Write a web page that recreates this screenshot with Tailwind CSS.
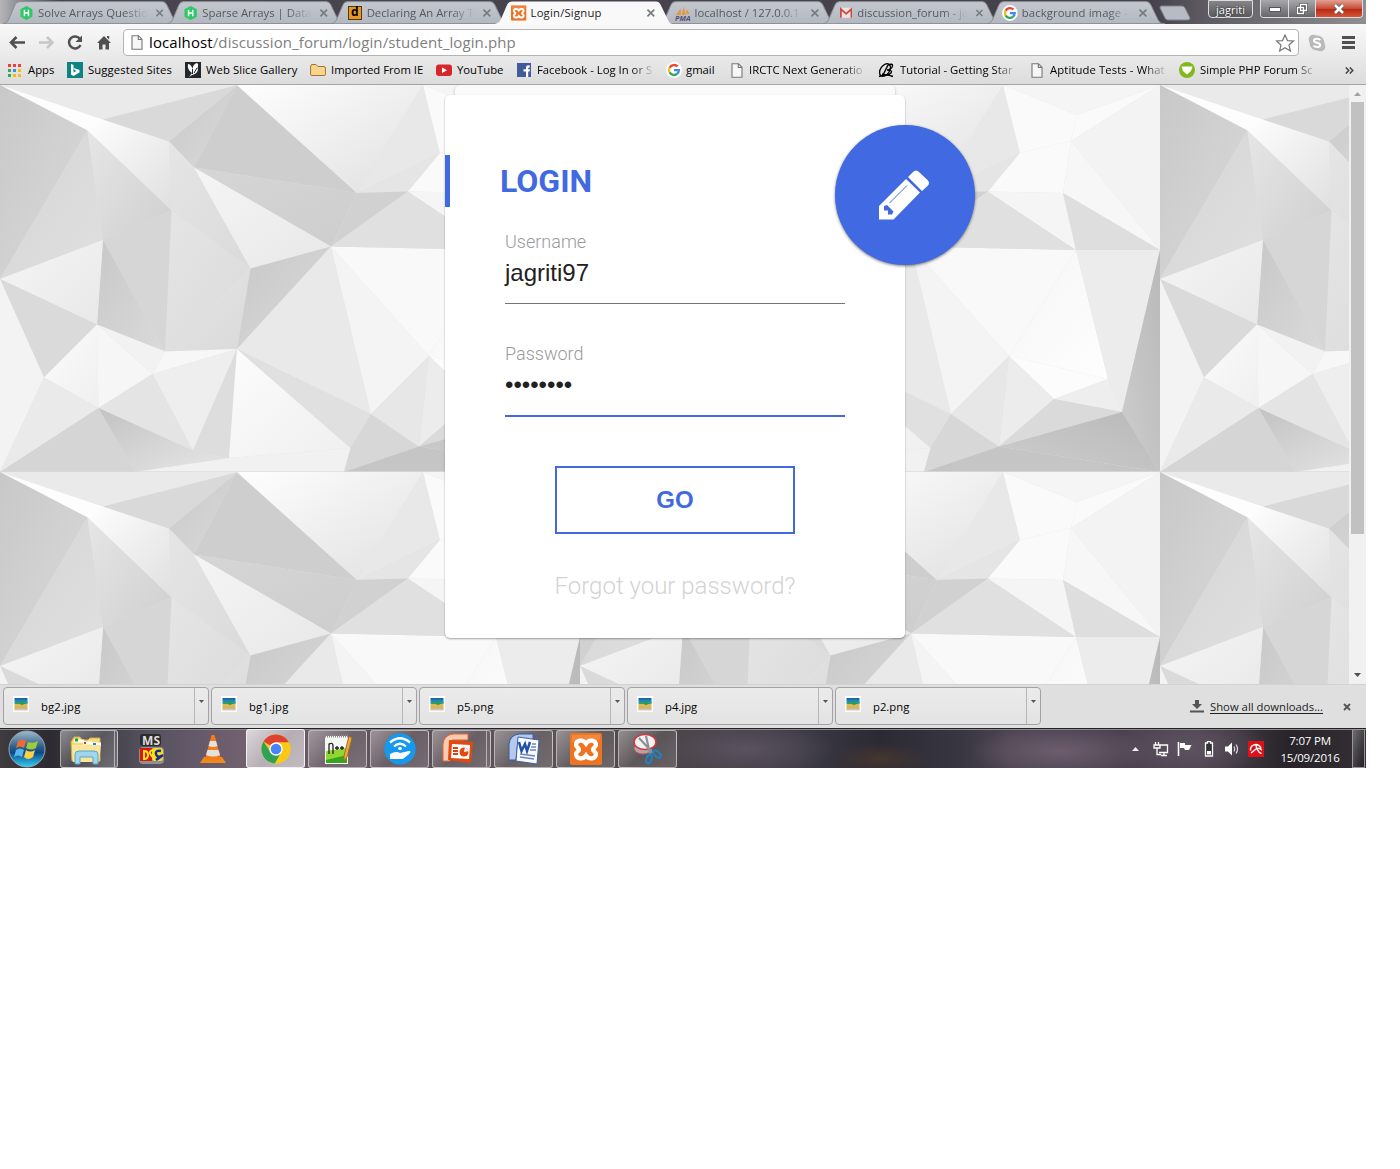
<!DOCTYPE html>
<html lang="en">
<head>
<meta charset="utf-8">
<title>Login/Signup</title>
<script src="https://cdn.jsdelivr.net/npm/@tailwindcss/browser@4"></script>
</head>
<body class="bg-white">
<svg class="absolute w-0 h-0" aria-hidden="true">
  <defs>
    <linearGradient id="tabg" x1="0" y1="0" x2="0" y2="1"><stop offset="0" stop-color="#c3c8cf"/><stop offset="1" stop-color="#b3b8c0"/></linearGradient>
    <linearGradient id="orb" x1="0" y1="0" x2="0" y2="1"><stop offset="0" stop-color="#9fb9cc"/><stop offset=".45" stop-color="#2d5d87"/><stop offset=".6" stop-color="#0b4a86"/><stop offset="1" stop-color="#35d0f5"/></linearGradient>
    <linearGradient id="beach" x1="0" y1="0" x2="0" y2="1"><stop offset="0" stop-color="#0f63a8"/><stop offset=".45" stop-color="#35a5cf"/><stop offset=".55" stop-color="#e8bd55"/><stop offset="1" stop-color="#d3a658"/></linearGradient>
    <symbol id="tab" viewBox="0 0 180 24"><path d="M0 24C4 23 5 21 6 19L12 5Q13.500 1.500 17 1.500H161Q164 1.500 165.500 4.500L173 20Q174.500 24 180 24Z" fill="url(#tabg)" stroke="#8b8c92"/></symbol>
    <symbol id="x" viewBox="0 0 10 10"><path d="M1.500 1.500L8.500 8.500M8.500 1.500L1.500 8.500" stroke="#777b80" stroke-width="1.700"/></symbol>
    <symbol id="hr" viewBox="0 0 14 16"><path d="M7 .5L13.500 4V12L7 15.500L.5 12V4Z" fill="#2ec866"/><path d="M4.800 4.500V11.500M9.200 4.500V11.500M4.800 8H9.200" stroke="#fff" stroke-width="1.600"/></symbol>
    <symbol id="goog" viewBox="0 0 16 16"><circle cx="8" cy="8" r="8" fill="#fff"/><g fill="none" stroke-width="2.300"><path d="M11.600 4.500A5 5 0 0 0 3.600 5.700" stroke="#ea4335"/><path d="M3.600 5.700A5 5 0 0 0 3.600 10.400" stroke="#fbbc05"/><path d="M3.600 10.400A5 5 0 0 0 11.300 11.700" stroke="#34a853"/><path d="M11.300 11.700A5 5 0 0 0 12.900 8.200H8" stroke="#4285f4"/></g></symbol>
    <symbol id="xam" viewBox="0 0 32 32"><rect width="32" height="32" rx="2" fill="#ee7422"/><path d="M2 2H30V7Q16 10 2 9Z" fill="#f79a55" opacity=".5"/><path d="M16 10.500C13 6 6 7 6 12C6 14.500 9 14.500 9 16.500C9 18.500 6 18.500 6 21C6 26 13 27 16 22.500C19 27 26 26 26 21C26 18.500 23 18.500 23 16.500C23 14.500 26 14.500 26 12C26 7 19 6 16 10.500Z" fill="none" stroke="#fff" stroke-width="4.200"/><path d="M12 16.500H20" stroke="#ee7422" stroke-width="3"/></symbol>
    <symbol id="page" viewBox="0 0 12 15"><path d="M1 .7H7.500L11 4.300V14.300H1ZM7.300 .7V4.500H11" fill="#f7f7f7" stroke="#777" stroke-width="1.100"/></symbol>
    <symbol id="pic" viewBox="0 0 16 16"><rect width="16" height="16" fill="#fff"/><rect x="1.500" y="2" width="13" height="12" fill="url(#beach)"/><path d="M2 8Q4 3.500 5 6Q7 7.500 8 5.500T11 6T14.500 5V7L9 9L5 7.500Z" fill="#299a58"/><rect x="1.500" y="12.500" width="13" height="2" fill="#cfc6b8"/></symbol>
    <symbol id="pencil" viewBox="0 0 52 52"><path d="M1 37L28 10L42 23.500L15.500 50.500H1Z" fill="#fff"/><path d="M30 8L35 3Q38 0 41 3L49.500 11Q52.500 14 49.500 17L44 22Z" fill="#fff"/><path d="M11.500 34L29 16.500" stroke="#4169e1" stroke-width="1"/><path d="M6 37L9 36L15.500 42.500L14 45.500H10V41.500H6Z" fill="#4169e1"/></symbol>

    <linearGradient id="a" x1="0" y1="0" x2="1" y2="1"><stop stop-color="#c8c8c8"/><stop offset="1" stop-color="#dadada"/></linearGradient>
    <linearGradient id="b" x1="0" y1="0" x2="1" y2="1"><stop stop-color="#fefefe"/><stop offset="1" stop-color="#e0e0e0"/></linearGradient>
    <linearGradient id="c" x1="0" y1="0" x2="1" y2="1"><stop stop-color="#d4d4d4"/><stop offset="1" stop-color="#e0e0e0"/></linearGradient>
    <linearGradient id="d" x1="0" y1="0" x2="1" y2="1"><stop stop-color="#e6e6e6"/><stop offset="1" stop-color="#cfcfcf"/></linearGradient>
    <linearGradient id="e" x1="0" y1="0" x2="1" y2="1"><stop stop-color="#f5f5f5"/><stop offset="1" stop-color="#e8e8e8"/></linearGradient>
    <linearGradient id="f" x1="0" y1="0" x2="1" y2="1"><stop stop-color="#e5e5e5"/><stop offset="1" stop-color="#dadada"/></linearGradient>
    <linearGradient id="g" x1="0" y1="0" x2="1" y2="1"><stop stop-color="#fcfcfc"/><stop offset="1" stop-color="#efefef"/></linearGradient>
    <linearGradient id="h" x1="0" y1="0" x2="1" y2="1"><stop stop-color="#f5f5f5"/><stop offset="1" stop-color="#fefefe"/></linearGradient>
    <linearGradient id="i" x1="0" y1="0" x2="1" y2="1"><stop stop-color="#c2c2c2"/><stop offset=".8" stop-color="#e0e0e0"/></linearGradient>
    <linearGradient id="j" x1="1" y1="0" x2="0" y2="1"><stop stop-color="#b9b9b9"/><stop offset="1" stop-color="#cdcdcd"/></linearGradient>
    <linearGradient id="k" x1="0" y1="0" x2="1" y2="1"><stop stop-color="#d6d6d6"/><stop offset="1" stop-color="#cdcdcd"/></linearGradient>
    <pattern id="poly" width="580" height="387" patternUnits="userSpaceOnUse">
      <rect width="580" height="387" fill="#e3e3e3"/>
      <g stroke="none">
      <path d="M0 0H237L103 34.500Z" fill="#eaeaea"/>
      <path d="M0 0L103 34.500L169 56.500L87.500 45.500Z" fill="#fdfdfd"/>
      <path d="M87.500 45.500L102 34.500L169 56.500L171.500 125.500Z" fill="url(#b)"/>
      <path d="M0 0L87.500 45.500L0 194Z" fill="url(#a)"/>
      <path d="M87.500 45.500L103 155L0 194Z" fill="url(#c)"/>
      <path d="M87.500 45.500L171.500 125.500L103 155Z" fill="url(#d)"/>
      <path d="M103 34.500L237 .5L169 56.500Z" fill="#d9d9d9"/>
      <path d="M169 56.500L237 .5L194 82.500Z" fill="url(#a)"/>
      <path d="M237 .5L357 108L194 82.500Z" fill="#cecece"/>
      <path d="M194 82.500L357 108L331 161.500Z" fill="url(#k)"/>
      <path d="M169 56.500L194 82.500L250.500 183.500L171.500 125.500Z" fill="url(#f)"/>
      <path d="M194 82.500L331 161.500L250.500 183.500Z" fill="url(#e)"/>
      <path d="M171.500 125.500L250.500 183.500L165 266.500Z" fill="url(#f)"/>
      <path d="M103 155L171.500 125.500L165 266.500Z" fill="#d6d6d6"/>
      <path d="M103 155L165 266.500L97 239.500Z" fill="url(#a)"/>
      <path d="M0 194L103 155L97 239.500Z" fill="url(#e)"/>
      <path d="M0 194L97 239.500L44 292.500Z" fill="#dadada"/>
      <path d="M0 194L44 292.500L0 387Z" fill="#f3f3f3"/>
      <path d="M250.500 183.500L165 266.500L237 264Z" fill="url(#f)"/>
      <path d="M250.500 183.500L331 161.500L237 264Z" fill="url(#a)"/>
      <path d="M97 239.500L98.500 323L44 292.500Z" fill="url(#g)"/>
      <path d="M97 239.500L152.500 289L98.500 323Z" fill="#f6f6f6"/>
      <path d="M97 239.500L165 266.500L152.500 289Z" fill="#f2f2f2"/>
      <path d="M165 266.500L237 264L152.500 289Z" fill="#f7f7f7"/>
      <path d="M152.500 289L237 264L193 365.500Z" fill="#eeeeee"/>
      <path d="M98.500 323L152.500 289L193 365.500Z" fill="#e4e4e4"/>
      <path d="M44 292.500L98.500 323L0 387Z" fill="#eaeaea"/>
      <path d="M0 387L98.500 323L135 387Z" fill="#d5d5d5"/>
      <path d="M98.500 323L193 365.500L229 373L135 387Z" fill="url(#i)"/>
      <path d="M237 264L193 365.500L229 373Z" fill="#dddddd"/>
      <path d="M237 264L229 373L350.500 363Z" fill="url(#g)"/>
      <path d="M237 264L350.500 363L371 329Z" fill="#e0e0e0"/>
      <path d="M331 161.500L237 264L371 329Z" fill="#e9e9e9"/>
      <path d="M135 387L229 373L350.500 363L344 387Z" fill="#f1f1f1"/>
      <path d="M350.500 363L371 329L419 361.500L344 387Z" fill="#d7d7d7"/>
      <path d="M331 161.500L371 329L429 271Z" fill="#f4f4f4"/>
      <path d="M331 161.500L429 271L496 165Z" fill="#f9f9f9"/>
      <path d="M429 271L496 165L528 294Z" fill="url(#h)"/>
      <path d="M237 0H423L357 108Z" fill="url(#b)"/>
      <path d="M423 0L440 68L357 108Z" fill="#e8e8e8"/>
      <path d="M440 68L408 106.500L357 108Z" fill="#e5e5e5"/>
      <path d="M357 108L408 106.500L331 161.500Z" fill="#d1d1d1"/>
      <path d="M408 106.500L496 165L331 161.500Z" fill="#e0e0e0"/>
      <path d="M423 0H580L497 30Z" fill="#f5f5f5"/>
      <path d="M423 0L497 30L491 56L440 68Z" fill="#fafafa"/>
      <path d="M497 30L580 0L491 56Z" fill="#fafafa"/>
      <path d="M491 56L580 0V165Z" fill="#f3f3f3"/>
      <path d="M440 68L491 56L483 108L408 106.500Z" fill="#fafafa"/>
      <path d="M491 56L580 165L483 108Z" fill="#f7f7f7"/>
      <path d="M408 106.500L483 108L496 165Z" fill="#f5f5f5"/>
      <path d="M483 108L580 165H496Z" fill="#dedede"/>
      <path d="M496 165H580L542 327L528 294Z" fill="#ececec"/>
      <path d="M580 165V387L542 327Z" fill="url(#j)"/>
      <path d="M429 271L528 294L474 314Z" fill="#fcfcfc"/>
      <path d="M528 294L542 327L474 314Z" fill="#eeeeee"/>
      <path d="M429 271L474 314L419 361.500Z" fill="#ececec"/>
      <path d="M371 329L429 271L419 361.500Z" fill="#e7e7e7"/>
      <path d="M474 314L542 327L419 361.500Z" fill="#dadada"/>
      <path d="M419 361.500L542 327L580 387Z" fill="url(#j)"/>
      <path d="M419 361.500L580 387H344Z" fill="#c5c5c5"/>
      </g>
      <rect y="386" width="580" height="1" fill="#dadada" opacity=".7"/>
    </pattern>
  </defs>
</svg>

<div class="w-[1366px] h-[768px] flex flex-col overflow-hidden font-['Open_Sans',sans-serif]">
  <!-- tab strip -->
  <header class="h-6 flex shrink-0 relative bg-[linear-gradient(90deg,#b5b4b7_0,#8b8a90_20px,#48454e_60px,#45414b_1150px,#5b595f_1200px,#8f8f93_1366px)] text-[11.3px] text-[#55585e] leading-6">
    <div class="w-[164px] h-6 relative flex items-center pl-5 shrink-0"><svg class="absolute left-[3px] top-0 w-[178px] h-6"><use href="#tab"/></svg>
      <svg class="relative w-3.5 h-4 mt-0.5"><use href="#hr"/></svg><span class="relative ml-[5px] w-[112px] whitespace-nowrap mt-0.5 tracking-[0.07px] [mask-image:linear-gradient(90deg,#000_78%,transparent)]">Solve Arrays Questio</span><svg class="relative w-2.5 h-2.5 ml-[7px] mt-0.5"><use href="#x"/></svg></div>
    <div class="w-[164px] h-6 relative flex items-center pl-5 shrink-0"><svg class="absolute left-[3px] top-0 w-[178px] h-6"><use href="#tab"/></svg>
      <svg class="relative w-3.5 h-4 mt-0.5"><use href="#hr"/></svg><span class="relative ml-[5px] w-[112px] whitespace-nowrap mt-0.5 [mask-image:linear-gradient(90deg,#000_78%,transparent)]">Sparse Arrays | Data</span><svg class="relative w-2.5 h-2.5 ml-[7px] mt-0.5"><use href="#x"/></svg></div>
    <div class="w-[164px] h-6 relative flex items-center pl-5 shrink-0"><svg class="absolute left-[3px] top-0 w-[178px] h-6"><use href="#tab"/></svg>
      <span class="relative w-3.5 h-3.5 mt-0.5 bg-[#e8981f] border border-[#4d3a1c] text-black font-bold text-[12px] leading-[10px] text-center">d</span><span class="relative ml-[5px] w-[112px] whitespace-nowrap mt-0.5 [mask-image:linear-gradient(90deg,#000_78%,transparent)]">Declaring An Array T</span><svg class="relative w-2.5 h-2.5 ml-[7px] mt-0.5"><use href="#x"/></svg></div>
    <div class="w-[164px] h-6 relative z-10 flex items-center pl-5 shrink-0 text-[#222]"><svg class="absolute left-[3px] top-0 w-[178px] h-6" viewBox="0 0 178 24"><path d="M0 24C4 23 5 21 6 19L12 5Q13.500 1.500 17 1.500H161Q164 1.500 165.500 4.500L173 20Q174.500 24 178 24Z" fill="#f9f9f9"/></svg>
      <svg class="relative w-4 h-4 -ml-px mt-0.5" viewBox="0 0 32 32"><use href="#xam"/></svg><span class="relative ml-1 w-[112px] whitespace-nowrap mt-0.5 tracking-[0.2px]">Login/Signup</span><svg class="relative w-2.5 h-2.5 ml-[7px] mt-0.5"><use href="#x"/></svg></div>
    <div class="w-[164px] h-6 relative flex items-center pl-[19px] shrink-0"><svg class="absolute left-[3px] top-0 w-[178px] h-6"><use href="#tab"/></svg>
      <svg class="relative w-4 h-4 mt-0.5" viewBox="0 0 16 16"><path d="M1 10L6 3V10ZM7 10L9 1L11 10ZM11.500 9L12 4L15 9Z" fill="#e8963a"/><text x="0" y="15.800" font-size="6.500" font-weight="bold" font-style="italic" textLength="16" lengthAdjust="spacingAndGlyphs" fill="#555079">PMA</text></svg><span class="relative ml-1 w-[112px] whitespace-nowrap mt-0.5 [mask-image:linear-gradient(90deg,#000_78%,transparent)]">localhost / 127.0.0.1</span><svg class="relative w-2.5 h-2.5 ml-[7px] mt-0.5"><use href="#x"/></svg></div>
    <div class="w-[164px] h-6 relative flex items-center pl-5 shrink-0"><svg class="absolute left-[3px] top-0 w-[178px] h-6"><use href="#tab"/></svg>
      <svg class="relative w-3.5 h-3 mt-0.5" viewBox="0 0 14 12"><rect width="14" height="11.500" fill="#e9e5e5"/><path d="M1 11.500V1.500L7 7L13 1.500V11.500" fill="none" stroke="#d2493d" stroke-width="2"/></svg><span class="relative ml-[5px] w-[112px] whitespace-nowrap mt-0.5 [mask-image:linear-gradient(90deg,#000_78%,transparent)]">discussion_forum - ja</span><svg class="relative w-2.5 h-2.5 ml-[7px] mt-0.5"><use href="#x"/></svg></div>
    <div class="w-[164px] h-6 relative flex items-center pl-[18px] shrink-0"><svg class="absolute left-[3px] top-0 w-[178px] h-6"><use href="#tab"/></svg>
      <svg class="relative w-4 h-4 mt-0.5"><use href="#goog"/></svg><span class="relative ml-1 w-[110px] whitespace-nowrap mt-0.5 tracking-[0.1px] [mask-image:linear-gradient(90deg,#000_80%,transparent)]">background image -</span><svg class="relative w-2.5 h-2.5 ml-[8px] mt-0.5"><use href="#x"/></svg></div>
    <svg class="w-8 h-4 mt-[5px] ml-[11px] shrink-0" viewBox="0 0 32 16"><path d="M2 1H23Q25 1 26 3L31 13Q31 15 29 15H9Q7 15 6 13L1 3Q1 1 2 1Z" fill="#b6bbc5" stroke="#808289"/></svg>
    <div class="w-[45px] h-[18px] ml-[17px] rounded-b border border-[#ddd] bg-gradient-to-b from-[#858587] to-[#5a5a5c] text-white text-[11px] leading-[17px] text-center [text-shadow:0_0_2px_#000]">jagriti</div>
    <div class="flex h-[18px] ml-[7px] w-[103px] rounded-b border border-[#ddd] border-t-0 overflow-hidden">
      <div class="w-7 border-r border-[#ddd] bg-gradient-to-b from-[#a8a8ab] to-[#67676b] flex justify-center items-center"><span class="w-3 h-[5px] mt-0.5 bg-white border border-[#555]"></span></div>
      <div class="w-[27px] border-r border-[#ddd] bg-gradient-to-b from-[#a8a8ab] to-[#67676b] flex justify-center items-center"><svg class="w-3 h-3" viewBox="0 0 12 12"><path d="M4.500 1.500H10.500V7.500H4.500ZM1.500 4.500H7.500V10.500H1.500Z" fill="#707078" stroke="#444" stroke-width="2.600"/><path d="M4.500 1.500H10.500V7.500H4.500ZM1.500 4.500H7.500V10.500H1.500Z" fill="none" stroke="#fff" stroke-width="1.400"/></svg></div>
      <div class="flex-1 bg-[linear-gradient(#e2a091,#c64e38_50%,#bb2a12_55%,#d4553b)] flex justify-center items-center"><svg class="w-3 h-3" viewBox="0 0 12 12"><path d="M2 2L10 10M10 2L2 10" stroke="#555" stroke-width="4.200"/><path d="M2 2L10 10M10 2L2 10" stroke="#fff" stroke-width="2.600"/></svg></div>
    </div>
  </header>

  <!-- toolbar -->
  <div class="h-[61px] shrink-0 bg-gradient-to-b from-[#f9f9f9] to-[#dcdcdc] border-b border-[#a7a5a6]">
    <div class="h-[37px] flex items-center pl-[9px]">
      <svg class="w-4 h-4 shrink-0" viewBox="0 0 16 16"><path d="M16 7.500H2M7.500 2L2 7.500L7.500 13" fill="none" stroke="#505050" stroke-width="2.600"/></svg>
      <svg class="w-4 h-4 ml-[14px] shrink-0" viewBox="0 0 16 16"><path d="M0 7.500H13.500M8 2L13.500 7.500L8 13" fill="none" stroke="#c6c6c6" stroke-width="2.600"/></svg>
      <svg class="w-4 h-4 ml-[12px] shrink-0" viewBox="0 0 16 16"><path d="M13 4A6 6 0 1 0 13.500 10" fill="none" stroke="#505050" stroke-width="2.500"/><path d="M15 .5V7H8.500Z" fill="#505050"/></svg>
      <svg class="w-4 h-4 ml-[13px] shrink-0" viewBox="0 0 16 16"><path d="M8 1L15 8H13V14.500H9.500V9.500H6.500V14.500H3V8H1ZM11 1H13.200V4.500L11 2.500Z" fill="#505050"/></svg>
      <div class="w-[1176px] h-[27px] ml-[11px] flex items-center bg-white border border-[#b4b4b4] rounded-sm pl-[7px] text-[15px] text-[#808080] shrink-0">
        <svg class="w-3 h-[15px]"><use href="#page"/></svg><span class="ml-[6px] -mt-0.5 tracking-[0.1px] leading-6"><span class="text-black">localhost</span>/discussion_forum/login/student_login.php</span>
        <svg class="w-5 h-[18px] ml-auto mr-[3px]" viewBox="0 0 20 18"><path d="M10 1L12.500 6.600L18.500 7L14 11L15.400 17L10 13.800L4.600 17L6 11L1.500 7L7.500 6.600Z" fill="#fff" stroke="#777" stroke-width="1.200"/></svg>
      </div>
      <svg class="w-[18px] h-[18px] ml-[9px] shrink-0" viewBox="0 0 18 18"><circle cx="9" cy="9" r="7.500" fill="#b9b9b9"/><circle cx="5.500" cy="5.500" r="4.800" fill="#b9b9b9"/><circle cx="12.500" cy="12.500" r="4.800" fill="#b9b9b9"/><path d="M12.300 6.200C11 4.300 6 4.200 6 6.700C6 9.400 12.200 8 12.200 11C12.200 13.800 7 13.600 5.600 11.500" fill="none" stroke="#fff" stroke-width="2"/></svg>
      <svg class="w-[13px] h-[13px] ml-4 shrink-0" viewBox="0 0 13 13"><path d="M0 1.500H13M0 6.500H13M0 11.500H13" stroke="#505050" stroke-width="2.800"/></svg>
    </div>
    <nav class="h-[18px] flex items-center pl-2 text-[11.3px] text-black whitespace-nowrap leading-[18px]">
      <div class="w-[59px] flex items-center shrink-0"><svg class="w-[13px] h-[13px] mr-[7px]" viewBox="0 0 13 13"><path d="M0 0H3V3H0ZM5 0H8V3H5ZM10 0H13V3H10Z" fill="#ea4335"/><path d="M0 5H3V8H0Z" fill="#34a853"/><path d="M5 5H8V8H5Z" fill="#4285f4"/><path d="M10 5H13V8H10Z" fill="#fbbc05"/><path d="M0 10H3V13H0Z" fill="#34a853"/><path d="M5 10H8V13H5ZM10 10H13V13H10Z" fill="#fbbc05"/></svg>Apps</div>
      <div class="w-[118px] flex items-center shrink-0 tracking-[0.12px]"><svg class="w-4 h-4 mr-[5px]" viewBox="0 0 16 16"><rect width="16" height="16" fill="#0c8484"/><path d="M4 2L6.500 3V10.500L9.500 9L7.500 8L6.800 6L12.500 8V10.500L6.500 14L4 12.500Z" fill="#fff"/></svg>Suggested Sites</div>
      <div class="w-[125px] flex items-center shrink-0 tracking-[0.08px]"><svg class="w-4 h-4 mr-[5px]" viewBox="0 0 16 16"><rect width="16" height="16" fill="#24282c"/><path d="M3 2Q6 2 7.500 7Q8 2 12 1Q14 2 12.500 6Q14 9 10 12L7 13L4 15L7 11Q2 8 3 2Z" fill="#fff"/><path d="M7.500 7V12M9 11L12 6" stroke="#24282c"/></svg>Web Slice Gallery</div>
      <div class="w-[126px] flex items-center shrink-0"><svg class="w-4 h-4 mr-[5px]" viewBox="0 0 16 16"><path d="M.6 5Q.6 2.500 2 2.500H6L8 4.500H14Q15.400 4.500 15.400 6V12.500Q15.400 13.500 14 13.500H2Q.6 13.500 .6 12.500Z" fill="#f8d58c" stroke="#a5732d"/></svg>Imported From IE</div>
      <div class="w-[81px] flex items-center shrink-0"><svg class="w-4 h-4 mr-[5px]" viewBox="0 0 16 16"><rect y="2.500" width="16" height="11.500" rx="3" fill="#d7262c"/><path d="M6 5.500L11 8.200L6 11Z" fill="#fff"/></svg>YouTube</div>
      <div class="w-[150px] flex items-center shrink-0"><svg class="w-3.5 h-3.5 mr-[6px]" viewBox="0 0 14 14"><rect width="14" height="14" fill="#3f5b9b"/><path d="M9 14V8.500H6.500V6.200H9V4.500Q9 2 12.800 2.400V4.500Q11.200 4.300 11.200 5.200V6.200H13L12.600 8.500H11.200V14Z" fill="#fff"/></svg><span class="w-[118px] [mask-image:linear-gradient(90deg,#000_80%,transparent)]">Facebook - Log In or S</span></div>
      <div class="w-[64px] flex items-center shrink-0"><svg class="w-4 h-4 mr-[4px] -ml-px"><use href="#goog"/></svg>gmail</div>
      <div class="w-[147px] flex items-center shrink-0"><svg class="w-3 h-[15px] mr-[6px]"><use href="#page"/></svg><span class="w-[118px] [mask-image:linear-gradient(90deg,#000_80%,transparent)]">IRCTC Next Generatio</span></div>
      <div class="w-[152px] flex items-center shrink-0"><svg class="w-[17px] h-4 mr-[5px]" viewBox="0 0 17 16"><ellipse cx="7" cy="8" rx="4.500" ry="7" transform="rotate(35 7 8)" fill="none" stroke="#000" stroke-width="1.300"/><path d="M5 13L10 3Q15 1 14.500 4Q14 7 9 8Q15 8 13 11Q10 14 4 12M1 14.500Q8 11.500 15 14.500" fill="none" stroke="#000" stroke-width="1.400"/></svg><span class="w-[118px] [mask-image:linear-gradient(90deg,#000_80%,transparent)]">Tutorial - Getting Star</span></div>
      <div class="w-[149px] flex items-center shrink-0"><svg class="w-3 h-[15px] ml-px mr-[7px]"><use href="#page"/></svg><span class="w-[118px] tracking-[0.1px] [mask-image:linear-gradient(90deg,#000_80%,transparent)]">Aptitude Tests - What</span></div>
      <div class="w-[165px] flex items-center shrink-0"><svg class="w-4 h-4 mr-[5px]" viewBox="0 0 16 16"><circle cx="8" cy="8" r="8" fill="#83b81a"/><path d="M2.500 4.500H13.500L12 9L8 12.500L4 9Z" fill="#fff"/></svg><span class="w-[118px] [mask-image:linear-gradient(90deg,#000_80%,transparent)]">Simple PHP Forum Sc</span></div>
      <svg class="w-[9px] h-[7px] ml-px" viewBox="0 0 9 7"><path d="M.8 .5L3.800 3.500L.8 6.500M4.800 .5L7.800 3.500L4.800 6.500" fill="none" stroke="#444" stroke-width="1.500"/></svg>
    </nav>
  </div>

  <!-- page -->
  <main class="h-[599px] shrink-0 flex relative overflow-hidden">
    <svg class="w-[1349px] h-[599px] shrink-0"><rect width="1349" height="599" fill="url(#poly)"/></svg>
    <div class="w-[17px] bg-[#f1f1f1] flex flex-col items-center">
      <svg class="w-[7px] h-1 mt-[7px]" viewBox="0 0 7 4"><path d="M0 4L3.500 0L7 4Z" fill="#a3a3a3"/></svg>
      <div class="w-[13px] h-[432px] mt-[6px] bg-[#c1c1c1]"></div>
      <svg class="w-[7px] h-1 mt-auto mb-[7px]" viewBox="0 0 7 4"><path d="M0 0L3.500 4L7 0Z" fill="#505050"/></svg>
    </div>
    <div class="absolute left-[455px] top-0 w-[440px] h-5 rounded-t-[5px] bg-[#fafafa] shadow-[0_1px_3px_rgba(0,0,0,.25)]"></div>
    <section class="absolute left-[445px] top-[10px] w-[460px] h-[543px] rounded-[5px] bg-white shadow-[0_1px_2px_rgba(0,0,0,.35)] pt-[60px] font-['Roboto',sans-serif]">
      <h1 class="h-[52px] border-l-[5px] border-[#4169e1] pl-[50px] text-[32px] leading-[52px] font-bold text-[#4169e1]">LOGIN</h1>
      <div class="ml-[60px] w-[340px] mt-[21px] h-[76px] border-b border-[#757575]">
        <div class="text-[18px] leading-[28px] font-light text-[#9a9a9a]">Username</div>
        <div class="text-[24px] leading-[28px] mt-[3px] text-[#212121] font-['Liberation_Sans',sans-serif]">jagriti97</div>
      </div>
      <div class="ml-[60px] w-[340px] mt-9 h-[77px] border-b-2 border-[#4169e1]">
        <div class="text-[18px] leading-[28px] font-light text-[#9a9a9a]">Password</div>
        <div class="text-[24px] leading-[28px] mt-[3px] text-[#212121] font-['Liberation_Sans',sans-serif]">••••••••</div>
      </div>
      <button class="block ml-[110px] mt-[49px] w-[240px] h-[68px] border-2 border-[#4169e1] text-[24px] font-bold text-[#4169e1] font-['Liberation_Sans',sans-serif]">GO</button>
      <div class="mt-[37px] text-center text-[24px] leading-[30px] font-light text-[#d3d3d3]">Forgot your password?</div>
    </section>
    <div class="absolute left-[835px] top-[40px] w-[140px] h-[140px] rounded-full bg-[#4169e1] shadow-[0_1px_3px_rgba(0,0,0,.5)] pl-[43px] pt-[44px]"><svg class="w-[52px] h-[52px]"><use href="#pencil"/></svg></div>
  </main>

  <!-- downloads shelf -->
  <div class="h-11 shrink-0 flex items-center bg-[#dfdfdf] border-t border-[#d2d2d2] pl-[3px] gap-[2px] text-[11.3px] text-black">
    <div class="w-[206px] h-[38px] mb-px flex border border-[#a3a3a3] rounded-sm bg-gradient-to-b from-[#ebebeb] to-[#e3e3e3]"><div class="flex-1 flex items-center pl-[9px]"><svg class="w-4 h-4 mb-1 mr-3"><use href="#pic"/></svg><span class="mt-0.5 tracking-[0.15px]">bg2.jpg</span></div><div class="w-[14px] border-l border-[#b5b5b5] pt-3 pl-[4px]"><svg class="w-[5px] h-[3px]" viewBox="0 0 5 3"><path d="M0 0H5L2.500 3Z" fill="#555"/></svg></div></div>
    <div class="w-[206px] h-[38px] mb-px flex border border-[#a3a3a3] rounded-sm bg-gradient-to-b from-[#ebebeb] to-[#e3e3e3]"><div class="flex-1 flex items-center pl-[9px]"><svg class="w-4 h-4 mb-1 mr-3"><use href="#pic"/></svg><span class="mt-0.5 tracking-[0.15px]">bg1.jpg</span></div><div class="w-[14px] border-l border-[#b5b5b5] pt-3 pl-[4px]"><svg class="w-[5px] h-[3px]" viewBox="0 0 5 3"><path d="M0 0H5L2.500 3Z" fill="#555"/></svg></div></div>
    <div class="w-[206px] h-[38px] mb-px flex border border-[#a3a3a3] rounded-sm bg-gradient-to-b from-[#ebebeb] to-[#e3e3e3]"><div class="flex-1 flex items-center pl-[9px]"><svg class="w-4 h-4 mb-1 mr-3"><use href="#pic"/></svg><span class="mt-0.5">p5.png</span></div><div class="w-[14px] border-l border-[#b5b5b5] pt-3 pl-[4px]"><svg class="w-[5px] h-[3px]" viewBox="0 0 5 3"><path d="M0 0H5L2.500 3Z" fill="#555"/></svg></div></div>
    <div class="w-[206px] h-[38px] mb-px flex border border-[#a3a3a3] rounded-sm bg-gradient-to-b from-[#ebebeb] to-[#e3e3e3]"><div class="flex-1 flex items-center pl-[9px]"><svg class="w-4 h-4 mb-1 mr-3"><use href="#pic"/></svg><span class="mt-0.5">p4.jpg</span></div><div class="w-[14px] border-l border-[#b5b5b5] pt-3 pl-[4px]"><svg class="w-[5px] h-[3px]" viewBox="0 0 5 3"><path d="M0 0H5L2.500 3Z" fill="#555"/></svg></div></div>
    <div class="w-[206px] h-[38px] mb-px flex border border-[#a3a3a3] rounded-sm bg-gradient-to-b from-[#ebebeb] to-[#e3e3e3]"><div class="flex-1 flex items-center pl-[9px]"><svg class="w-4 h-4 mb-1 mr-3"><use href="#pic"/></svg><span class="mt-0.5">p2.png</span></div><div class="w-[14px] border-l border-[#b5b5b5] pt-3 pl-[4px]"><svg class="w-[5px] h-[3px]" viewBox="0 0 5 3"><path d="M0 0H5L2.500 3Z" fill="#555"/></svg></div></div>
    <svg class="w-3.5 h-[13px] ml-[147px]" viewBox="0 0 14 13"><path d="M5 0H9V4H12L7 9L2 4H5ZM0 10.500H14V12.500H0Z" fill="#555"/></svg>
    <span class="ml-1 w-[114px] mt-px whitespace-nowrap underline underline-offset-2 text-[#222]">Show all downloads...</span>
    <svg class="w-2 h-2 ml-[17px]" viewBox="0 0 8 8"><path d="M1 1L7 7M7 1L1 7" stroke="#555" stroke-width="1.900"/></svg>
  </div>

  <!-- taskbar -->
  <footer class="h-10 shrink-0 relative flex items-center border-t border-[#222] shadow-[inset_0_1px_0_#8d8a90] bg-[radial-gradient(ellipse_90px_30px_at_745px_20px,#5b5260,transparent),radial-gradient(ellipse_50px_16px_at_880px_30px,#46362f,transparent),radial-gradient(ellipse_90px_26px_at_1060px_22px,#6d5d6e,transparent),radial-gradient(ellipse_80px_30px_at_1190px_18px,#5d5260,transparent),linear-gradient(90deg,#3f3b40_0,#2d2b31_50px,#46434c_110px,#56525f_150px,#685b6c_210px,#71616f_240px,#5c5058_400px,#5b5356_540px,#4a4346_680px,#3c3a45_800px,#2b2a34_880px,#383641_960px,#4d4552_1010px,#4a414f_1120px,#4f4552_1200px,#272328_1290px,#332f35_1366px)]">
    <svg class="w-[38px] h-[38px] ml-2 shrink-0" viewBox="0 0 38 38"><circle cx="19" cy="19" r="18" fill="url(#orb)" stroke="#91a8b7"/><path d="M10 11Q14 8 18 11L16 18Q12 15 8 18Z" fill="#ee6b37"/><path d="M20 12Q25 14 30 11L28 18Q23 21 18 18Z" fill="#9ccb3d"/><path d="M8 20Q12 17 16 20L14 27Q10 24 6 27Z" fill="#58b4ea"/><path d="M18 20Q22 23 27 20L25 27Q20 31 16 27Z" fill="#fbd146"/></svg>
    <div class="w-[58px] h-[38px] ml-[14px] shrink-0 flex border border-white/50 rounded-[3px] bg-[linear-gradient(135deg,#ffffff70,#ffffff20_50%,#ffffff38)] items-center pl-[9px]"><svg class="w-8 h-8" viewBox="0 0 32 32"><path d="M1 9L4 4H10L12 7H18L20 5H30V28H2Z" fill="#f6db7c" stroke="#d6ac3e"/><path d="M4 8H14M13 10H22M22 11H31" stroke="#fff" stroke-width="3"/><path d="M5 7H8" stroke="#19a53a" stroke-width="3"/><path d="M14 10H16" stroke="#d43a2a" stroke-width="2"/><path d="M23 11H26" stroke="#2a86d4" stroke-width="2"/><path d="M2 12H31L29 29H3Z" fill="#fae69b"/><path d="M5 31V21Q5 18 9 18H24Q28 18 28 21V31H23V24H10V31Z" fill="#9fd5ed" stroke="#59a6ca"/></svg><span class="h-9 ml-3 border-l border-white/50"></span></div>
    <svg class="w-[30px] h-[32px] ml-[17px] shrink-0" viewBox="0 0 30 32"><rect x="5" y="1" width="21" height="12" rx="3" fill="#2b2b2b"/><text x="7" y="11.500" font-size="12" font-weight="bold" textLength="18" fill="#ddd">MS</text><rect x="4" y="14" width="25" height="17" rx="4" fill="#8f8f95"/><rect x="5" y="15" width="12" height="13" fill="#db1414"/><rect x="17" y="15" width="11" height="13" rx="3" fill="#f3df19"/><path d="M9 18V26Q13 26 13 22T9 18ZM18 17Q13 18 16 22T20 27" fill="none" stroke="#ffe91b" stroke-width="2"/><path d="M26 18Q20 17 21 21T26 23T21 27" fill="none" stroke="#1b2b93" stroke-width="2.500"/></svg>
    <svg class="w-[28px] h-[30px] ml-[34px] shrink-0" viewBox="0 0 28 30"><path d="M5 23H23L27 29H1Z" fill="#f08a1c"/><path d="M12.500 1H15.500L22 25Q14 29 6 25Z" fill="#f47d17"/><path d="M11 7H17L18.500 12Q14 14 9.500 12ZM8.500 16H19.500L21 21Q14 24 7 21Z" fill="#e4e2e0"/></svg>
    <div class="w-[59px] h-[39px] ml-[19px] shrink-0 flex items-center justify-center border border-white/80 rounded-[3px] bg-[linear-gradient(135deg,#ffffffc0,#ffffff80_50%,#ffffff98)]"><svg class="w-[30px] h-[30px]" viewBox="0 0 30 30"><circle cx="15" cy="15" r="14.500" fill="#fbc816"/><path d="M15 15L2.500 7.500A14.500 14.500 0 0 1 28 8.500H15Z" fill="#e04232"/><path d="M2.500 7.500A14.500 14.500 0 0 0 14 29.500L20.500 18L15 15L9.500 18Z" fill="#30a353"/><path d="M15 8.500H28A14.500 14.500 0 0 1 14 29.500L20.500 18Z" fill="#fbc816"/><circle cx="15" cy="15" r="6.700" fill="#fff"/><circle cx="15" cy="15" r="5.300" fill="#4685f3"/></svg></div>
    <div class="w-[59px] h-[38px] ml-[3px] shrink-0 flex items-center justify-center border border-white/50 rounded-[3px] bg-[linear-gradient(135deg,#ffffff60,#ffffff15_50%,#ffffff28)]"><svg class="w-8 h-8" viewBox="0 0 32 32"><path d="M3 3H26V31H3Z" fill="#f5f7f2"/><path d="M4 18L25 15V30H4Z" fill="#91d633"/><path d="M4 27L25 22V30H4Z" fill="#38a51e"/><path d="M3 3H26" stroke="#888" stroke-dasharray="1 1" stroke-width="3"/><path d="M7 21V11Q11 9 11 13V21M13 15H17M15 13V17M18 15H22M20 13V17" fill="none" stroke="#222" stroke-width="1.300"/><path d="M30 5L25 24L22 28L22 23L27 3Z" fill="#edac38" stroke="#a96825"/></svg></div>
    <div class="w-[59px] h-[38px] ml-[3px] shrink-0 flex items-center justify-center border border-white/50 rounded-[3px] bg-[linear-gradient(135deg,#ffffff60,#ffffff15_50%,#ffffff28)]"><svg class="w-8 h-8" viewBox="0 0 32 32"><circle cx="16" cy="16" r="15.700" fill="#1698ec"/><path d="M6 9.500Q16 1 26 9.500M10 13.500Q16 8 22 13.500" fill="none" stroke="#fff" stroke-width="2.300"/><circle cx="16" cy="15.500" r="1.800" fill="#fff"/><path d="M6 21Q12 17.500 16 20L25 18Q28 18 25 21L19 26H11L6 26Z" fill="#fff"/></svg></div>
    <div class="w-[59px] h-[38px] ml-[3px] shrink-0 flex items-center border border-white/50 rounded-[3px] bg-[linear-gradient(135deg,#ffffff60,#ffffff15_50%,#ffffff28)] pl-[9px]"><svg class="w-8 h-8" viewBox="0 0 32 32"><path d="M1 28V11Q2 2 11 1H26V7H10L8 28Z" fill="#f8cbb3" stroke="#e96431"/><path d="M7 7L31 9L29 30L6 27Z" fill="#e3490e"/><path d="M10 11L28 12L27 26L9 25Z" fill="#fff"/><path d="M11 15H16M11 18H16M11 21H16" stroke="#d84310" stroke-width="2"/><circle cx="22" cy="19" r="4.500" fill="#e3490e"/><path d="M22 19L23 14L27 18Z" fill="#fff"/></svg><span class="h-9 ml-3 border-l border-white/50"></span></div>
    <div class="w-[59px] h-[38px] ml-[3px] shrink-0 flex items-center justify-center border border-white/50 rounded-[3px] bg-[linear-gradient(135deg,#ffffff60,#ffffff15_50%,#ffffff28)]"><svg class="w-8 h-8" viewBox="0 0 32 32"><path d="M1 27V11Q2 2 11 1H25V7H10L8 27Z" fill="#b7c9ea" stroke="#2f5caa"/><path d="M10 4L31 7L29 31L8 28Z" fill="#f9faff" stroke="#3c62ad"/><path d="M11 9L13.500 18L17 11L19 18L22 9" fill="none" stroke="#2252a7" stroke-width="2.500"/><path d="M24 11H28M23 14H28M22 17H28M12 21L27 23M12 24L26 26" stroke="#6c85b7" stroke-width="1.500"/></svg></div>
    <div class="w-[59px] h-[38px] ml-[3px] shrink-0 flex items-center justify-center border border-white/50 rounded-[3px] bg-[linear-gradient(135deg,#ffffff60,#ffffff15_50%,#ffffff28)]"><svg class="w-8 h-8" viewBox="0 0 32 32"><use href="#xam"/></svg></div>
    <div class="w-[59px] h-[38px] ml-[3px] shrink-0 flex items-center justify-center border border-white/50 rounded-[3px] bg-[linear-gradient(135deg,#ffffff60,#ffffff15_50%,#ffffff28)]"><svg class="w-8 h-8" viewBox="0 0 32 32"><ellipse cx="11" cy="15" rx="9" ry="6" fill="#b7a3a6" stroke="#c35b63"/><ellipse cx="13" cy="9" rx="11" ry="7.500" fill="#f2f2f2" stroke="#d03840" stroke-width="1.500"/><path d="M7 5L21 20M14 3L18 21" stroke="#8b9297" stroke-width="2.200"/><g fill="none" stroke="#1c83c6" stroke-width="2"><ellipse cx="25" cy="21" rx="2.500" ry="4.500" transform="rotate(-45 25 21)"/><ellipse cx="17" cy="26" rx="2.500" ry="4.500" transform="rotate(20 17 26)"/></g></svg></div>
    <svg class="w-[7px] h-1 ml-[455px] shrink-0" viewBox="0 0 7 4"><path d="M0 4L3.500 0L7 4Z" fill="#eee"/></svg>
    <svg class="w-4 h-4 ml-[14px] shrink-0" viewBox="0 0 16 16"><path d="M6.500 4H14.500V11.500H6M8 14.500H14M11 11.500V14.500M2.500 1V4M5.500 1V4M1 4H7V7H1ZM4 7V13.500H8" fill="none" stroke="#fff" stroke-width="1.300"/></svg>
    <svg class="w-4 h-4 ml-2 shrink-0" viewBox="0 0 16 16"><path d="M1.500 1V15" stroke="#fff" stroke-width="1.600"/><path d="M3 2H8V4H14.500L12 9H8L7 7H3Z" fill="#fff"/></svg>
    <svg class="w-[10px] h-4 ml-[11px] shrink-0" viewBox="0 0 10 16"><path d="M3.500 2V.7H6.500V2H8.500V15H1.500V2Z" fill="#333" stroke="#fff" stroke-width="1.300"/><path d="M3 10H7V13.500H3Z" fill="#fff"/></svg>
    <svg class="w-4 h-4 ml-[10px] shrink-0" viewBox="0 0 16 16"><path d="M1 5.500H4L8 1.500V14.500L4 10.500H1Z" fill="#fff"/><path d="M10 5.500Q11.500 8 10 10.500M12 3.500Q15 8 12 12.500" fill="none" stroke="#ddd" stroke-width="1.200"/></svg>
    <svg class="w-4 h-4 ml-2 shrink-0" viewBox="0 0 16 16"><rect width="16" height="16" fill="#e01019"/><path d="M2.500 9.500Q2 4 8 3.500Q12.500 4 13 8.500Q10.500 6.500 8 8L3 12M8 3.500Q8 7 10 9.500Q11 12 13.500 12.500" fill="none" stroke="#fff" stroke-width="1.400"/></svg>
    <div class="w-[84px] ml-1 text-center text-white text-[11.5px] leading-[17px] tracking-[-0.2px] shrink-0">7:07 PM<br>15/09/2016</div>
    <div class="w-[13px] h-[39px] border border-[#99959b] bg-gradient-to-br from-white/30 to-black/20 shrink-0"></div>
  </footer>
</div>
</body>
</html>
